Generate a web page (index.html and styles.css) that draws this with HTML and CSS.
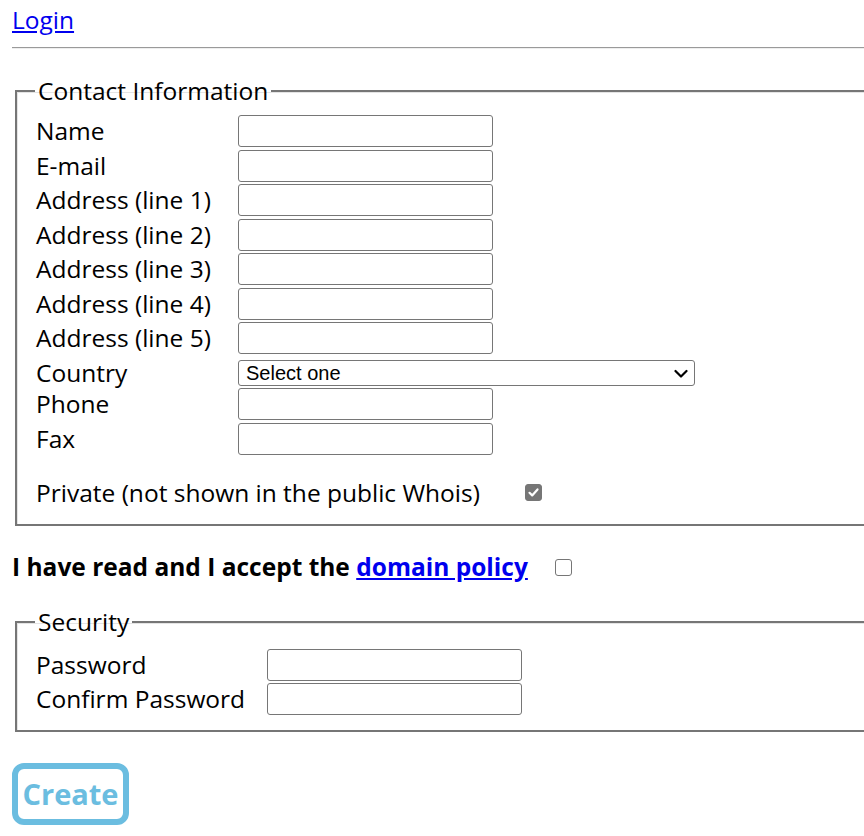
FILE: index.html
```html
<!DOCTYPE html>
<html>
<head>
<meta charset="utf-8">
<link rel="stylesheet" href="styles.css">
</head>
<body>
<a href="#" class="login">Login</a>
<hr class="rule">
<form class="form">
  <fieldset class="box contact">
    <legend class="legend">Contact Information</legend>
    <div class="grid">
      <label class="lbl">Name</label><input class="txt" type="text">
      <label class="lbl">E-mail</label><input class="txt" type="text">
      <label class="lbl">Address (line 1)</label><input class="txt" type="text">
      <label class="lbl">Address (line 2)</label><input class="txt" type="text">
      <label class="lbl">Address (line 3)</label><input class="txt" type="text">
      <label class="lbl">Address (line 4)</label><input class="txt" type="text">
      <label class="lbl">Address (line 5)</label><input class="txt" type="text">
      <label class="lbl country">Country</label>
      <div class="selwrap">
        <select class="sel"><option>Select one</option></select>
        <svg class="chev" width="14" height="10" viewBox="0 0 14 10"><path d="M1.5 2 L7 7.5 L12.5 2" fill="none" stroke="#000" stroke-width="2.2" stroke-linecap="round" stroke-linejoin="round"/></svg>
      </div>
      <label class="lbl">Phone</label><input class="txt" type="text">
      <label class="lbl">Fax</label><input class="txt" type="text">
    </div>
    <div class="private">
      <span class="lbl">Private (not shown in the public Whois)</span>
      <span class="chk checked"><svg width="13" height="13" viewBox="0 0 13 13"><path d="M2.5 6.8 L5.2 9.4 L10.5 3.4" fill="none" stroke="#fff" stroke-width="2.2" stroke-linecap="round" stroke-linejoin="round"/></svg></span>
    </div>
  </fieldset>
  <div class="accept">
    <span>I have read and I accept the <a href="#" class="policy">domain policy</a></span>
    <span class="chk"></span>
  </div>
  <fieldset class="box security">
    <legend class="legend">Security</legend>
    <div class="grid grid2">
      <label class="lbl">Password</label><input class="txt" type="password">
      <label class="lbl">Confirm Password</label><input class="txt" type="password">
    </div>
  </fieldset>
  <button type="button" class="create">Create</button>
</form>
</body>
</html>
```
FILE: styles.css
```css
html, body {
  overflow: hidden;
}
body {
  margin: 0;
  padding: 0 0 0 12px;
  font-family: "Open Sans", "Noto Sans", sans-serif;
  font-size: 24.5px;
  color: #000;
  background: #fff;
  width: 1000px;
}
.login {
  display: block;
  color: #0000ee;
  text-decoration: underline;
  line-height: 32px;
  height: 32px;
  margin-top: 4px;
  width: max-content;
}
.rule {
  margin: 11px 0 0 0;
  border: 0;
  border-top: 1px solid #9a9a9a;
  border-bottom: 1px solid #eeeeee;
  height: 0;
}
.form {
  margin-top: 26px;
}
.box {
  margin: 0 0 0 3px;
  border: 2px solid #767676;
  border-right: 0;
  box-shadow: 1px 1px 0 #e4e4e4 inset;
  padding: 0 0 0 19px;
}
.legend {
  padding: 0 3px;
  margin-left: -1px;
  line-height: 32px;
}
.contact {
  padding-top: 8px;
  padding-bottom: 15px;
}
.grid {
  display: grid;
  grid-template-columns: 202px auto;
  justify-content: start;
  row-gap: 2.5px;
  align-items: center;
}
.grid2 {
  grid-template-columns: 231px auto;
}
.lbl {
  line-height: 32px;
  white-space: nowrap;
}
.txt {
  width: 255px;
  height: 32px;
  box-sizing: border-box;
  border: 1px solid #767676;
  border-radius: 3px;
  margin: 0;
  padding: 0 3px;
  background: #fff;
}
.country {
  line-height: 26px;
  padding-top: 3px;
  align-self: start;
}
.selwrap {
  position: relative;
  padding-top: 3px;
  align-self: start;
}
.sel {
  appearance: none;
  -webkit-appearance: none;
  width: 457px;
  height: 26px;
  box-sizing: border-box;
  border: 1px solid #767676;
  border-radius: 3px;
  background: #fff;
  font-family: "Liberation Sans", Arial, sans-serif;
  font-size: 20px;
  color: #000;
  padding: 0 7px;
  margin: 0;
  display: block;
}
.chev {
  position: absolute;
  left: 436px;
  top: 12px;
  pointer-events: none;
}
.private {
  display: flex;
  align-items: center;
  margin-top: 22px;
}
.chk {
  display: inline-flex;
  align-items: center;
  justify-content: center;
  width: 17px;
  height: 17px;
  box-sizing: border-box;
  border: 1px solid #767676;
  border-radius: 3px;
  background: #fff;
}
.private .chk {
  margin-left: 45px;
}
.chk.checked {
  background: #767676;
  border-color: #767676;
}
.accept {
  display: flex;
  align-items: center;
  font-weight: bold;
  margin-top: 25px;
  line-height: 32px;
}
.accept .chk {
  margin-left: 27px;
  margin-top: 2px;
}
.policy {
  color: #0000ee;
}
.security {
  margin-top: 23px;
  padding-top: 11px;
  padding-bottom: 15px;
}
.create {
  margin-top: 31px;
  display: flex;
  align-items: center;
  justify-content: center;
  width: 117px;
  height: 62px;
  box-sizing: border-box;
  border: 6px solid #6bbde0;
  border-radius: 12px;
  background: #fff;
  color: #6bbde0;
  font-family: "Open Sans", "Noto Sans", sans-serif;
  font-weight: bold;
  font-size: 29px;
  line-height: 1;
  padding: 0 0 2px 0;
}
```
